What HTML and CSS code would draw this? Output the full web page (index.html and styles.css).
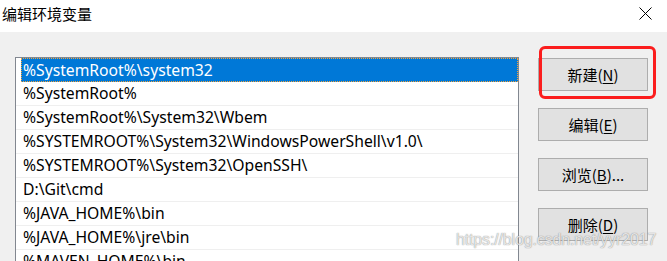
FILE: index.html
```html
<!DOCTYPE html>
<html lang="zh-CN">
<head>
<meta charset="utf-8">
<title>编辑环境变量</title>
<link rel="stylesheet" href="styles.css">
</head>
<body>
<div class="dialog">
  <div class="titlebar">
    <span class="title">编辑环境变量</span>
    <svg class="close" width="13" height="13" viewBox="0 0 13 13"><path d="M0.5 0.5L12.5 12.5M12.5 0.5L0.5 12.5" stroke="#000" stroke-width="1" fill="none"/></svg>
  </div>
  <div class="content">
    <div class="list">
      <div class="row selected"><span class="item">%SystemRoot%\system32</span></div>
      <div class="row"><span class="item">%SystemRoot%</span></div>
      <div class="row"><span class="item">%SystemRoot%\System32\Wbem</span></div>
      <div class="row"><span class="item">%SYSTEMROOT%\System32\WindowsPowerShell\v1.0\</span></div>
      <div class="row"><span class="item">%SYSTEMROOT%\System32\OpenSSH\</span></div>
      <div class="row"><span class="item">D:\Git\cmd</span></div>
      <div class="row"><span class="item">%JAVA_HOME%\bin</span></div>
      <div class="row"><span class="item">%JAVA_HOME%\jre\bin</span></div>
      <div class="row"><span class="item">%MAVEN_HOME%\bin</span></div>
    </div>
    <div class="buttons">
      <button class="btn">新建(<u>N</u>)</button>
      <button class="btn">编辑(<u>E</u>)</button>
      <button class="btn">浏览(<u>B</u>)...</button>
      <button class="btn">删除(<u>D</u>)</button>
    </div>
  </div>
  <div class="highlight"></div>
  <div class="watermark">https://blog.csdn.net/yyr2017</div>
</div>
</body>
</html>
```
FILE: styles.css
```css
html, body {
  margin: 0;
  padding: 0;
  background: #f0f0f0;
}
.dialog {
  position: relative;
  width: 667px;
  height: 261px;
  overflow: hidden;
  font-family: "Noto Sans", "Noto Sans CJK SC", sans-serif;
  color: #000;
}
.titlebar {
  height: 32px;
  background: #fff;
  display: flex;
  align-items: flex-start;
  justify-content: space-between;
}
.title {
  font-family: "Noto Sans CJK SC", sans-serif;
  font-size: 15px;
  line-height: 28px;
  padding-left: 2px;
}
.close {
  margin-top: 7px;
  margin-right: 15px;
}
.content {
  display: flex;
  align-items: flex-start;
  padding: 25px 0 0 15px;
  gap: 19px;
}
.list {
  width: 504px;
  height: 240px;
  box-sizing: border-box;
  border: 1px solid #828790;
  background: #fff;
  overflow: hidden;
}
.row {
  height: 24px;
  box-sizing: border-box;
  border-bottom: 1px solid #efefef;
  padding-left: 5px;
  display: flex;
}
.item {
  flex: 1;
  font-size: 15.7px;
  line-height: 23px;
  padding-left: 2px;
  white-space: nowrap;
}
.selected {
  border-bottom: none;
}
.selected .item {
  background: #0078d7;
  color: #fff;
  line-height: 22px;
  padding-left: 1px;
  border: 1px dotted #f4a33b;
}
.buttons {
  display: flex;
  flex-direction: column;
  gap: 17px;
  margin-top: 1px;
}
.btn {
  width: 110px;
  height: 33px;
  box-sizing: border-box;
  background: #e1e1e1;
  border: 1px solid #adadad;
  border-radius: 0;
  font-family: "Noto Sans CJK SC", sans-serif;
  font-size: 15px;
  color: #000;
  padding: 0;
  line-height: 30px;
}
.btn u {
  text-underline-offset: 2px;
}
.highlight {
  position: absolute;
  left: 539px;
  top: 46px;
  width: 117px;
  height: 53px;
  box-sizing: border-box;
  border: 3px solid #fb1d1d;
  border-radius: 6px;
}
.watermark {
  position: absolute;
  left: 456px;
  top: 231px;
  font-family: "Liberation Sans", Arial, sans-serif;
  font-size: 16px;
  letter-spacing: -0.15px;
  color: rgba(255, 255, 255, 0.75);
  text-shadow: 0 0 1px rgba(120, 120, 120, 0.6), 0 0 1px rgba(120, 120, 120, 0.6);
}
```
